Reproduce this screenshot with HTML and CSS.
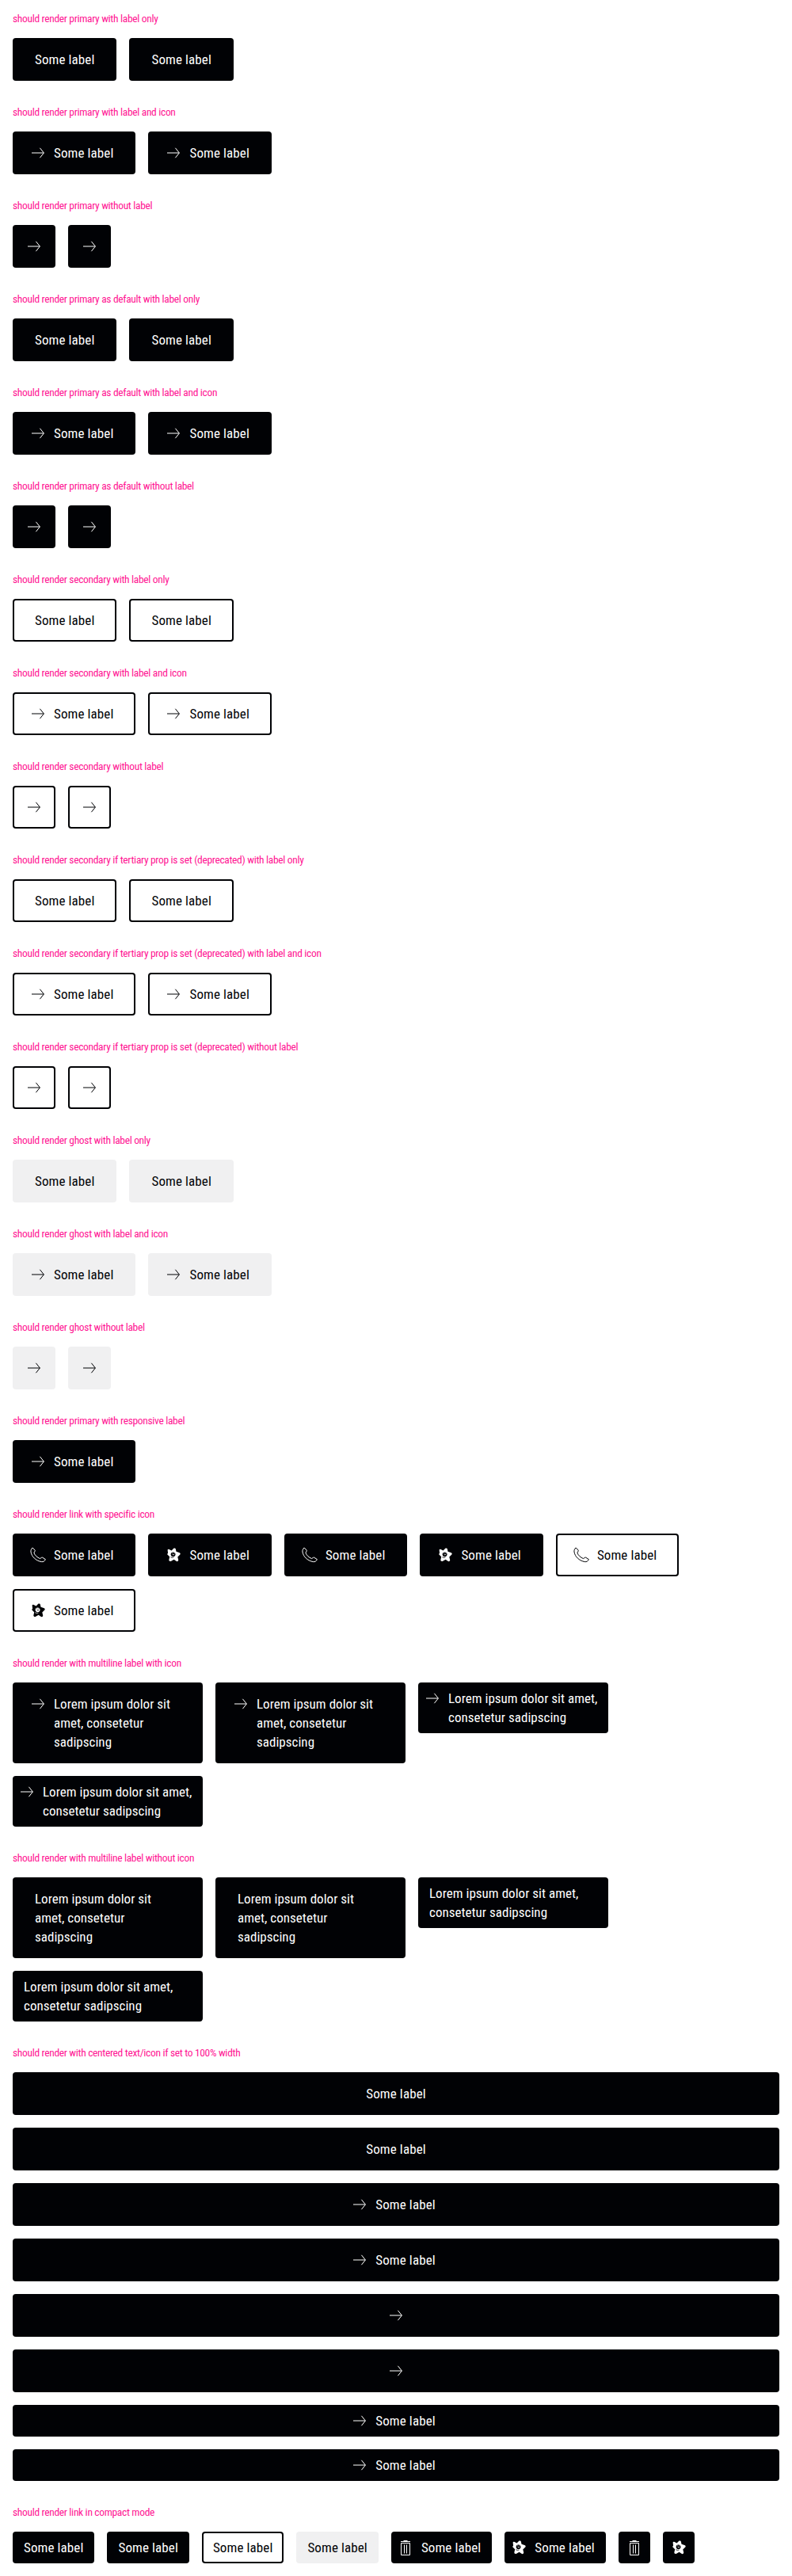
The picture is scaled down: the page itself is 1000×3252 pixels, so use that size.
FILE: index.html
```
<!DOCTYPE html>
<html lang="en">
<head>
<meta charset="utf-8">
<title>Link overview</title>
<link rel="stylesheet" href="styles.css">
</head>
<body>
<svg class="sprite" aria-hidden="true">
  <symbol id="arrow" viewBox="0 0 24 24"><path d="M4 12h15.3M14.4 5.8 19.4 12l-5 6.2" fill="none" stroke="currentColor"/></symbol>
  <symbol id="phone" viewBox="0 0 24 24"><path d="M5.2 2.900 8.100 6c.3.4.3.8 0 1.200L6.900 9.300c1.300 3.300 4.100 5.900 7.600 7.300l2-1.300c.4-.3.9-.3 1.300 0l3.500 2.200c-.6 2.200-2.700 3.500-5 3.100C9.400 19.300 3.900 14.200 3 8.200c-.3-2 .5-3.900 2.200-5.300z" fill="none" stroke="currentColor" stroke-linejoin="round"/></symbol>
  <symbol id="trash" viewBox="0 0 24 24"><path d="M6.500 6.500h11v15h-11zM6 4.500h12M9.500 3.500h5M10.500 8.500v11M13.500 8.500v11" fill="none" stroke="currentColor"/></symbol>
  <symbol id="star" viewBox="0 0 24 24"><path d="M4.600 5.500c.4-.8 1.300-.8 2-.4l3 1.300 2.400-2.500c1-.9 2.700-.5 2.900.8l.6 3.100 3.700 1.200c1.600.5 2 1.800.9 2.800l-2.800 2.700.9 3.800c.2 1.600-1.400 2.400-2.700 1.500l-2.900-2-3.500 1.900c-1.500.7-3.100-.2-2.700-1.700l.8-3.700-2.500-2.500c-.9-.9-.5-1.600.4-1.900z" fill="currentColor"/><ellipse class="star-face" cx="11.600" cy="11.200" rx="2.900" ry="2.800"/><path d="M10.300 9.800h.9M12.600 9.600h.9M10.700 11.600q1.500.9 2.500-.5" fill="none" stroke="currentColor" stroke-width=".8"/><path class="star-chin" d="M8.400 14.800q2 1.100 4 .2"/></symbol>
</svg>

<section><h2>should render primary with label only</h2>
<div class="row"><a class="btn">Some label</a><a class="btn">Some label</a></div></section>

<section><h2>should render primary with label and icon</h2>
<div class="row"><a class="btn icon"><svg><use href="#arrow"/></svg>Some label</a><a class="btn icon"><svg><use href="#arrow"/></svg>Some label</a></div></section>

<section><h2>should render primary without label</h2>
<div class="row"><a class="btn only"><svg><use href="#arrow"/></svg></a><a class="btn only"><svg><use href="#arrow"/></svg></a></div></section>

<section><h2>should render primary as default with label only</h2>
<div class="row"><a class="btn">Some label</a><a class="btn">Some label</a></div></section>

<section><h2>should render primary as default with label and icon</h2>
<div class="row"><a class="btn icon"><svg><use href="#arrow"/></svg>Some label</a><a class="btn icon"><svg><use href="#arrow"/></svg>Some label</a></div></section>

<section><h2>should render primary as default without label</h2>
<div class="row"><a class="btn only"><svg><use href="#arrow"/></svg></a><a class="btn only"><svg><use href="#arrow"/></svg></a></div></section>

<section><h2>should render secondary with label only</h2>
<div class="row"><a class="btn secondary">Some label</a><a class="btn secondary">Some label</a></div></section>

<section><h2>should render secondary with label and icon</h2>
<div class="row"><a class="btn icon secondary"><svg><use href="#arrow"/></svg>Some label</a><a class="btn icon secondary"><svg><use href="#arrow"/></svg>Some label</a></div></section>

<section><h2>should render secondary without label</h2>
<div class="row"><a class="btn only secondary"><svg><use href="#arrow"/></svg></a><a class="btn only secondary"><svg><use href="#arrow"/></svg></a></div></section>

<section><h2>should render secondary if tertiary prop is set (deprecated) with label only</h2>
<div class="row"><a class="btn secondary">Some label</a><a class="btn secondary">Some label</a></div></section>

<section><h2>should render secondary if tertiary prop is set (deprecated) with label and icon</h2>
<div class="row"><a class="btn icon secondary"><svg><use href="#arrow"/></svg>Some label</a><a class="btn icon secondary"><svg><use href="#arrow"/></svg>Some label</a></div></section>

<section><h2>should render secondary if tertiary prop is set (deprecated) without label</h2>
<div class="row"><a class="btn only secondary"><svg><use href="#arrow"/></svg></a><a class="btn only secondary"><svg><use href="#arrow"/></svg></a></div></section>

<section><h2>should render ghost with label only</h2>
<div class="row"><a class="btn ghost">Some label</a><a class="btn ghost">Some label</a></div></section>

<section><h2>should render ghost with label and icon</h2>
<div class="row"><a class="btn icon ghost"><svg><use href="#arrow"/></svg>Some label</a><a class="btn icon ghost"><svg><use href="#arrow"/></svg>Some label</a></div></section>

<section><h2>should render ghost without label</h2>
<div class="row"><a class="btn only ghost"><svg><use href="#arrow"/></svg></a><a class="btn only ghost"><svg><use href="#arrow"/></svg></a></div></section>

<section><h2>should render primary with responsive label</h2>
<div class="row"><a class="btn icon"><svg><use href="#arrow"/></svg>Some label</a></div></section>

<section><h2>should render link with specific icon</h2>
<div class="row"><a class="btn icon"><svg><use href="#phone"/></svg>Some label</a><a class="btn icon"><svg><use href="#star"/></svg>Some label</a><a class="btn icon"><svg><use href="#phone"/></svg>Some label</a><a class="btn icon"><svg><use href="#star"/></svg>Some label</a><a class="btn icon secondary"><svg><use href="#phone"/></svg>Some label</a><a class="btn icon secondary"><svg><use href="#star"/></svg>Some label</a></div></section>

<section><h2>should render with multiline label with icon</h2>
<div class="row"><a class="btn icon multi"><svg><use href="#arrow"/></svg><span>Lorem ipsum dolor sit<br>amet, consetetur<br>sadipscing</span></a><a class="btn icon multi"><svg><use href="#arrow"/></svg><span>Lorem ipsum dolor sit<br>amet, consetetur<br>sadipscing</span></a><a class="btn icon multi compact"><svg><use href="#arrow"/></svg><span>Lorem ipsum dolor sit amet,<br>consetetur sadipscing</span></a><a class="btn icon multi compact"><svg><use href="#arrow"/></svg><span>Lorem ipsum dolor sit amet,<br>consetetur sadipscing</span></a></div></section>

<section><h2>should render with multiline label without icon</h2>
<div class="row"><a class="btn multi"><span>Lorem ipsum dolor sit<br>amet, consetetur<br>sadipscing</span></a><a class="btn multi"><span>Lorem ipsum dolor sit<br>amet, consetetur<br>sadipscing</span></a><a class="btn multi compact"><span>Lorem ipsum dolor sit amet,<br>consetetur sadipscing</span></a><a class="btn multi compact"><span>Lorem ipsum dolor sit amet,<br>consetetur sadipscing</span></a></div></section>

<section><h2>should render with centered text/icon if set to 100% width</h2>
<div class="row stack"><a class="btn">Some label</a><a class="btn">Some label</a><a class="btn icon"><svg><use href="#arrow"/></svg>Some label</a><a class="btn icon"><svg><use href="#arrow"/></svg>Some label</a><a class="btn only"><svg><use href="#arrow"/></svg></a><a class="btn only"><svg><use href="#arrow"/></svg></a><a class="btn icon compact"><svg><use href="#arrow"/></svg>Some label</a><a class="btn icon compact"><svg><use href="#arrow"/></svg>Some label</a></div></section>

<section><h2>should render link in compact mode</h2>
<div class="row"><a class="btn compact">Some label</a><a class="btn compact">Some label</a><a class="btn compact secondary">Some label</a><a class="btn compact ghost">Some label</a><a class="btn icon compact"><svg><use href="#trash"/></svg>Some label</a><a class="btn icon compact"><svg><use href="#star"/></svg>Some label</a><a class="btn only compact"><svg><use href="#trash"/></svg></a><a class="btn only compact"><svg><use href="#star"/></svg></a></div></section>
</body>
</html>
```
FILE: styles.css
```
* { box-sizing: border-box; }

body {
  margin: 0;
  background: #fff;
  color: #010205;
  font-family: "Roboto Condensed", Roboto, "Liberation Sans", sans-serif;
}

.sprite { display: none; }

section { padding: 15px 16px 16px; }

h2 {
  margin: 0 0 17px;
  color: deeppink;
  font-size: 13.5px;
  font-weight: 400;
  line-height: 16px;
  letter-spacing: -0.33px;
  white-space: nowrap;
}

.row {
  display: flex;
  flex-wrap: wrap;
  align-items: flex-start;
  gap: 16px;
}

.btn {
  --surface: #010205;
  display: flex;
  justify-content: center;
  gap: 8px;
  padding: 15px 28px;
  border-radius: 4px;
  background: var(--surface);
  color: #fff;
  font-size: 17px;
  font-weight: 400;
  line-height: 24px;
  letter-spacing: 0.115px;
  white-space: nowrap;
}

.btn svg {
  flex: none;
  width: 24px;
  height: 24px;
}

.btn.icon { padding-left: 20px; }
.btn.only { padding: 15px; }

.btn.compact { padding: 8px 14px; }
.btn.compact.icon { padding-left: 6px; }
.btn.compact.only { padding: 8px; }

.secondary {
  --surface: #fff;
  box-shadow: inset 0 0 0 2px #010205;
  color: #010205;
}

.ghost {
  --surface: #f0f0f1;
  color: #010205;
}

.btn.multi {
  justify-content: flex-start;
  width: 240px;
  letter-spacing: 0.03px;
}

.stack {
  flex-direction: column;
  align-items: stretch;
}

.star-face { fill: var(--surface); }

.star-chin {
  fill: none;
  stroke: var(--surface);
  stroke-width: 0.8px;
}
```
